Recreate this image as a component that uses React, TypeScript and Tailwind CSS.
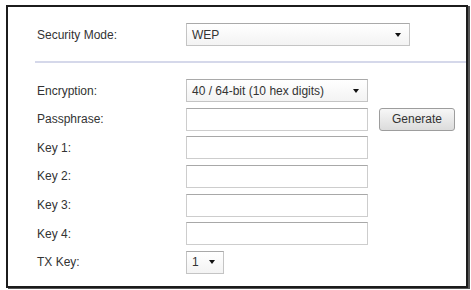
import React from "react";

function Caret() {
  return (
    <svg width="6" height="4" viewBox="0 0 6 4" className="shrink-0">
      <path d="M0 0 H6 L3 4 Z" fill="#111" />
    </svg>
  );
}

function Select({ value, width }: { value: string; width: string }) {
  return (
    <div
      className={`flex h-[23px] ${width} items-center justify-between border border-[#c4c4c4] border-t-[#a9a9a9] bg-gradient-to-b from-white to-[#f3f3f3] pl-[5px] pr-[8px]`}
    >
      <span>{value}</span>
      <Caret />
    </div>
  );
}

function TextBox() {
  return (
    <div className="h-[23px] w-[182px] border border-[#cdcdcd] border-t-[#a8a8a8] bg-white" />
  );
}

function Row({ label, children }: { label: string; children: React.ReactNode }) {
  return (
    <div className="flex h-[23px] items-center">
      <div className="w-[149px] shrink-0">{label}</div>
      {children}
    </div>
  );
}

export default function App() {
  return (
    <div
      className="h-[290px] w-[471px] bg-white pl-[6px] pt-[5px]"
      style={{ fontFamily: '"Liberation Sans", Arial, sans-serif' }}
    >
      <div className="h-[283px] w-[462px] border-2 border-[#1c1c1c] bg-white text-[12px] text-[#333] shadow-[2px_1px_0_#555]">
        {/* Security mode */}
        <div className="pl-[29px] pt-[16px]">
          <Row label="Security Mode:">
            <Select value="WEP" width="w-[224px]" />
          </Row>
        </div>

        {/* Divider */}
        <div className="ml-[27px] mt-[15px] h-[2px] bg-[#d5d8ea]" />

        {/* WEP settings */}
        <div className="flex flex-col gap-[5.67px] pl-[29px] pt-[16px]">
          <Row label="Encryption:">
            <Select value="40 / 64-bit (10 hex digits)" width="w-[182px]" />
          </Row>
          <Row label="Passphrase:">
            <TextBox />
            <button className="ml-[11px] h-[23px] w-[76px] rounded-[3px] border border-[#9d9d9d] bg-gradient-to-b from-[#f7f7f7] to-[#dcdcdc] text-[12px] text-[#333]">
              Generate
            </button>
          </Row>
          <Row label="Key 1:">
            <TextBox />
          </Row>
          <Row label="Key 2:">
            <TextBox />
          </Row>
          <Row label="Key 3:">
            <TextBox />
          </Row>
          <Row label="Key 4:">
            <TextBox />
          </Row>
          <Row label="TX Key:">
            <Select value="1" width="w-[38px]" />
          </Row>
        </div>
      </div>
    </div>
  );
}
